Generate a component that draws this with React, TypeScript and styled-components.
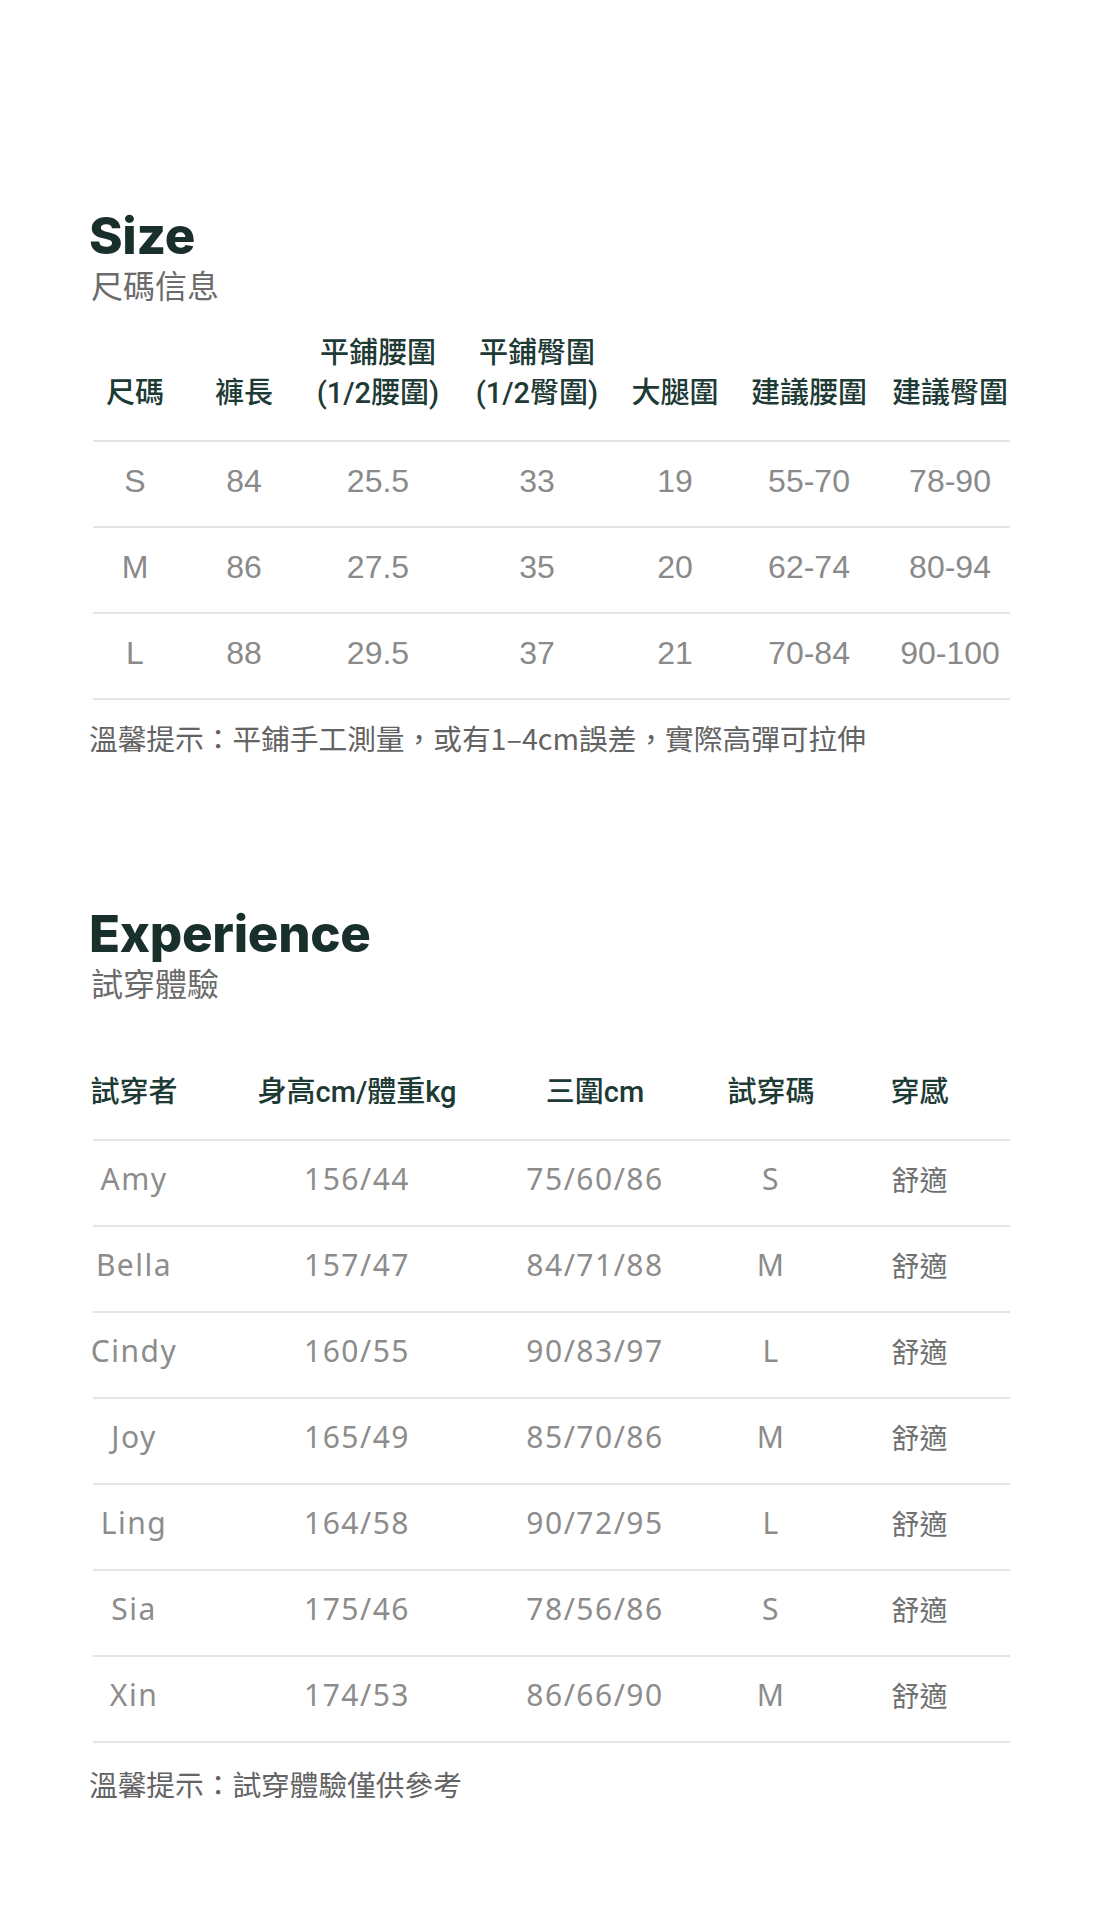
import React from "react";
import styled, { createGlobalStyle } from "styled-components";

const GlobalStyle = createGlobalStyle`
  html, body {
    margin: 0;
    padding: 0;
    background: #ffffff;
  }
  body {
    font-family: "Noto Sans CJK TC", "Noto Sans", sans-serif;
  }
`;

const Page = styled.main`
  width: 1100px;
  height: 1920px;
  box-sizing: border-box;
  padding: 208px 0 0 89px;
  background: #ffffff;
  overflow: hidden;
`;

const Section = styled.section<{ $after: number }>`
  display: flex;
  flex-direction: column;
  align-items: flex-start;
  margin-bottom: ${(p) => p.$after}px;
`;

const Title = styled.h2`
  margin: 0;
  font-family: Inter, "Liberation Sans", sans-serif;
  font-weight: 800;
  font-size: 51px;
  line-height: 56px;
  letter-spacing: -0.3px;
  color: #182f2b;
`;

const Subtitle = styled.div`
  margin: 0 0 0 2px;
  font-family: "Noto Sans CJK TC", sans-serif;
  font-size: 32px;
  line-height: 40px;
  color: #6b6b6b;
`;

const Table = styled.div<{ $top: number }>`
  margin: ${(p) => p.$top}px 0 0 4px;
  width: 917px;
`;

const Row = styled.div<{ $cols: string; $padRight?: number }>`
  display: grid;
  grid-template-columns: ${(p) => p.$cols};
  justify-items: center;
  box-sizing: border-box;
  padding-right: ${(p) => p.$padRight ?? 0}px;
  border-bottom: 2px solid #e5e5e5;
`;

const HeadRow = styled(Row)`
  align-items: end;
  padding-bottom: 27px;
`;

const DataRow = styled(Row)<{ $lift: number }>`
  align-items: center;
  height: 86px;
  padding-bottom: ${(p) => p.$lift}px;
`;

const HeadCell = styled.div`
  display: flex;
  flex-direction: column;
  align-items: center;
  font-family: Roboto, "Noto Sans CJK TC", sans-serif;
  font-weight: 500;
  font-size: 29px;
  line-height: 40px;
  color: #1d3a35;
  white-space: nowrap;
`;

const SizeValue = styled.div`
  font-family: "Liberation Sans", Arial, sans-serif;
  font-size: 32px;
  line-height: 40px;
  color: #8a8a8a;
  white-space: nowrap;
`;

const FitValue = styled.div<{ $cjk?: boolean }>`
  font-family: ${(p) =>
    p.$cjk ? `"Noto Sans CJK TC", sans-serif` : `"Noto Sans", sans-serif`};
  font-size: ${(p) => (p.$cjk ? 28 : 30)}px;
  letter-spacing: ${(p) => (p.$cjk ? 0 : 1.5)}px;
  line-height: 40px;
  color: ${(p) => (p.$cjk ? "#707070" : "#8c8c8c")};
  white-space: nowrap;
`;

const Note = styled.p<{ $top: number }>`
  margin: ${(p) => p.$top}px 0 0 0;
  font-family: "Noto Sans CJK TC", sans-serif;
  font-size: 28.7px;
  line-height: 40px;
  color: #636363;
  white-space: nowrap;
`;

const SIZE_COLS = "84px 134px 134px 184px 92px 176px 106px";
const FIT_COLS = "82px 364px 112px 240px 57px";

const sizeHead: string[][] = [
  ["尺碼"],
  ["褲長"],
  ["平鋪腰圍", "(1/2腰圍)"],
  ["平鋪臀圍", "(1/2臀圍)"],
  ["大腿圍"],
  ["建議腰圍"],
  ["建議臀圍"],
];

const sizeRows: string[][] = [
  ["S", "84", "25.5", "33", "19", "55-70", "78-90"],
  ["M", "86", "27.5", "35", "20", "62-74", "80-94"],
  ["L", "88", "29.5", "37", "21", "70-84", "90-100"],
];

const fitHead = ["試穿者", "身高cm/體重kg", "三圍cm", "試穿碼", "穿感"];

const fitRows: string[][] = [
  ["Amy", "156/44", "75/60/86", "S"],
  ["Bella", "157/47", "84/71/88", "M"],
  ["Cindy", "160/55", "90/83/97", "L"],
  ["Joy", "165/49", "85/70/86", "M"],
  ["Ling", "164/58", "90/72/95", "L"],
  ["Sia", "175/46", "78/56/86", "S"],
  ["Xin", "174/53", "86/66/90", "M"],
];

export default function App() {
  return (
    <>
      <GlobalStyle />
      <Page>
        <Section $after={148}>
          <Title>Size</Title>
          <Subtitle>尺碼信息</Subtitle>
          <Table $top={29}>
            <HeadRow $cols={SIZE_COLS} $padRight={7}>
              {sizeHead.map((lines, i) => (
                <HeadCell key={i}>
                  {lines.map((l) => (
                    <span key={l}>{l}</span>
                  ))}
                </HeadCell>
              ))}
            </HeadRow>
            {sizeRows.map((row) => (
              <DataRow key={row[0]} $cols={SIZE_COLS} $padRight={7} $lift={6}>
                {row.map((v, i) => (
                  <SizeValue key={i}>{v}</SizeValue>
                ))}
              </DataRow>
            ))}
          </Table>
          <Note $top={18}>溫馨提示：平鋪手工測量，或有1–4cm誤差，實際高彈可拉伸</Note>
        </Section>

        <Section $after={0}>
          <Title>Experience</Title>
          <Subtitle>試穿體驗</Subtitle>
          <Table $top={70}>
            <HeadRow $cols={FIT_COLS} $padRight={62}>
              {fitHead.map((h) => (
                <HeadCell key={h}>{h}</HeadCell>
              ))}
            </HeadRow>
            {fitRows.map((row) => (
              <DataRow key={row[0]} $cols={FIT_COLS} $padRight={62} $lift={8}>
                {row.map((v, i) => (
                  <FitValue key={i}>{v}</FitValue>
                ))}
                <FitValue $cjk>舒適</FitValue>
              </DataRow>
            ))}
          </Table>
          <Note $top={21}>溫馨提示：試穿體驗僅供參考</Note>
        </Section>
      </Page>
    </>
  );
}
